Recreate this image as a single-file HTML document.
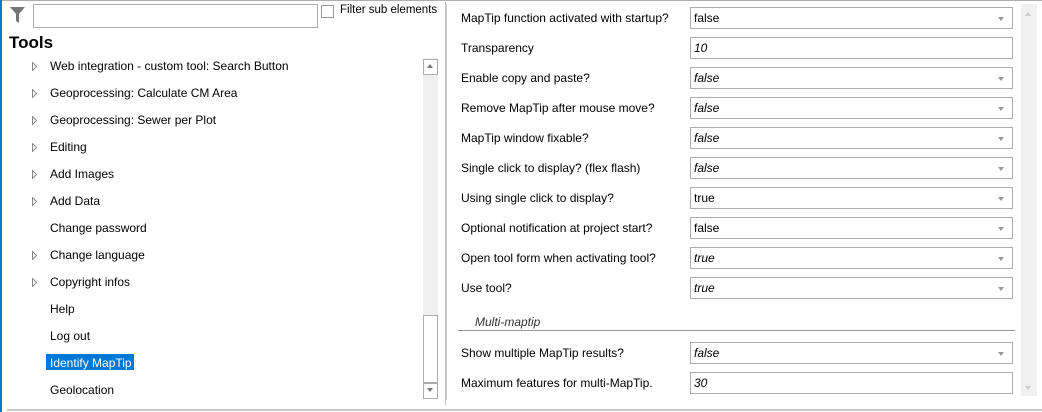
<!DOCTYPE html><html><head><style>
body{margin:0;width:1042px;height:412px;background:#fff;font-family:"Liberation Sans",sans-serif;font-size:12px;color:#000;position:relative;overflow:hidden}
.a{position:absolute}
.it{position:absolute;left:50px;white-space:nowrap}
.ar{position:absolute;left:32px}
.lb{position:absolute;left:461px;white-space:nowrap}
.cb{position:absolute;left:690px;width:323px;height:22px;border:1px solid #adadad;background:#fff;line-height:20px;padding-left:3px;box-sizing:border-box}
.cb i{font-style:italic}
.cb.d:after{content:"";position:absolute;right:8px;top:9px;border-top:4px solid #999;border-left:3px solid transparent;border-right:3px solid transparent}
</style></head><body>
<div class="a" style="left:0;top:0;width:1042px;height:1px;background:#adadad"></div>
<div class="a" style="left:0;top:0;width:2px;height:412px;background:#0078d7"></div>
<div class="a" style="left:7px;top:409px;width:1035px;height:2px;background:#c8c8c8"></div>
<svg class="a" style="left:10px;top:7px" width="15" height="16"><path d="M0 0H15L9 7V16L6 14V7Z" fill="#777"/></svg>
<div class="a" style="left:33px;top:4px;width:283px;height:22px;border:1px solid #adadad"></div>
<div class="a" style="left:321px;top:5px;width:11px;height:11px;border:1px solid #999"></div>
<div class="a" style="left:340px;top:4px;font-size:11.5px">Filter sub elements</div>
<div class="a" style="left:445px;top:0;width:1px;height:405px;background:#c8c8c8"></div>
<div class="a" style="left:9px;top:33px;font-size:17px;font-weight:bold">Tools</div>
<svg width="0" height="0" style="position:absolute"><defs><path id="t" d="M0.5 0.5L4.5 4.5L0.5 8.5Z" fill="none" stroke="#888"/></defs></svg>
<svg class="ar" style="top:62px" width="6" height="9"><use href="#t"/></svg><div class="it" style="top:59px">Web integration - custom tool: Search Button</div>
<svg class="ar" style="top:89px" width="6" height="9"><use href="#t"/></svg><div class="it" style="top:86px">Geoprocessing: Calculate CM Area</div>
<svg class="ar" style="top:116px" width="6" height="9"><use href="#t"/></svg><div class="it" style="top:113px">Geoprocessing: Sewer per Plot</div>
<svg class="ar" style="top:143px" width="6" height="9"><use href="#t"/></svg><div class="it" style="top:140px">Editing</div>
<svg class="ar" style="top:170px" width="6" height="9"><use href="#t"/></svg><div class="it" style="top:167px">Add Images</div>
<svg class="ar" style="top:197px" width="6" height="9"><use href="#t"/></svg><div class="it" style="top:194px">Add Data</div>
<div class="it" style="top:221px">Change password</div>
<svg class="ar" style="top:251px" width="6" height="9"><use href="#t"/></svg><div class="it" style="top:248px">Change language</div>
<svg class="ar" style="top:278px" width="6" height="9"><use href="#t"/></svg><div class="it" style="top:275px">Copyright infos</div>
<div class="it" style="top:302px">Help</div>
<div class="it" style="top:329px">Log out</div>
<div class="a" style="left:46px;top:354px;width:88px;height:16px;background:#0078d7"></div>
<div class="it" style="top:356px;color:#fff">Identify MapTip</div>
<div class="it" style="top:383px">Geolocation</div>
<div class="a" style="left:423px;top:58px;width:15px;height:340px;background:#f0f0f0"></div>
<div class="a" style="left:423px;top:59px;width:13px;height:14px;border:1px solid #adadad;background:#fff"></div>
<div class="a" style="left:427px;top:64px;border-bottom:4px solid #777;border-left:3px solid transparent;border-right:3px solid transparent"></div>
<div class="a" style="left:423px;top:315px;width:13px;height:66px;border:1px solid #adadad;background:#fff"></div>
<div class="a" style="left:423px;top:383px;width:13px;height:14px;border:1px solid #adadad;background:#fff"></div>
<div class="a" style="left:427px;top:388px;border-top:4px solid #777;border-left:3px solid transparent;border-right:3px solid transparent"></div>
<div class="a" style="left:446px;top:4px;width:1px;height:396px;background:#c8c8c8"></div>
<div class="a" style="left:1021px;top:4px;width:16px;height:392px;background:#f0f0f0"></div>
<div class="a" style="left:1025px;top:12px;border-bottom:4px solid #ccc;border-left:3px solid transparent;border-right:3px solid transparent"></div>
<div class="a" style="left:1025px;top:386px;border-top:4px solid #ccc;border-left:3px solid transparent;border-right:3px solid transparent"></div>

<div class="lb" style="top:11px">MapTip function activated with startup?</div><div class="cb d" style="top:7px">false</div>
<div class="lb" style="top:41px">Transparency</div><div class="cb" style="top:37px"><i>10</i></div>
<div class="lb" style="top:71px">Enable copy and paste?</div><div class="cb d" style="top:67px"><i>false</i></div>
<div class="lb" style="top:101px">Remove MapTip after mouse move?</div><div class="cb d" style="top:97px"><i>false</i></div>
<div class="lb" style="top:131px">MapTip window fixable?</div><div class="cb d" style="top:127px"><i>false</i></div>
<div class="lb" style="top:161px">Single click to display? (flex flash)</div><div class="cb d" style="top:157px"><i>false</i></div>
<div class="lb" style="top:191px">Using single click to display?</div><div class="cb d" style="top:187px">true</div>
<div class="lb" style="top:221px">Optional notification at project start?</div><div class="cb d" style="top:217px">false</div>
<div class="lb" style="top:251px">Open tool form when activating tool?</div><div class="cb d" style="top:247px"><i>true</i></div>
<div class="lb" style="top:281px">Use tool?</div><div class="cb d" style="top:277px"><i>true</i></div>
<div class="lb" style="top:315px;left:475px;font-style:italic;color:#333">Multi-maptip</div>
<div class="a" style="left:458px;top:330px;width:557px;height:1px;background:#999"></div>
<div class="lb" style="top:346px">Show multiple MapTip results?</div><div class="cb d" style="top:342px"><i>false</i></div>
<div class="lb" style="top:376px">Maximum features for multi-MapTip.</div><div class="cb" style="top:372px"><i>30</i></div>
</body></html>
